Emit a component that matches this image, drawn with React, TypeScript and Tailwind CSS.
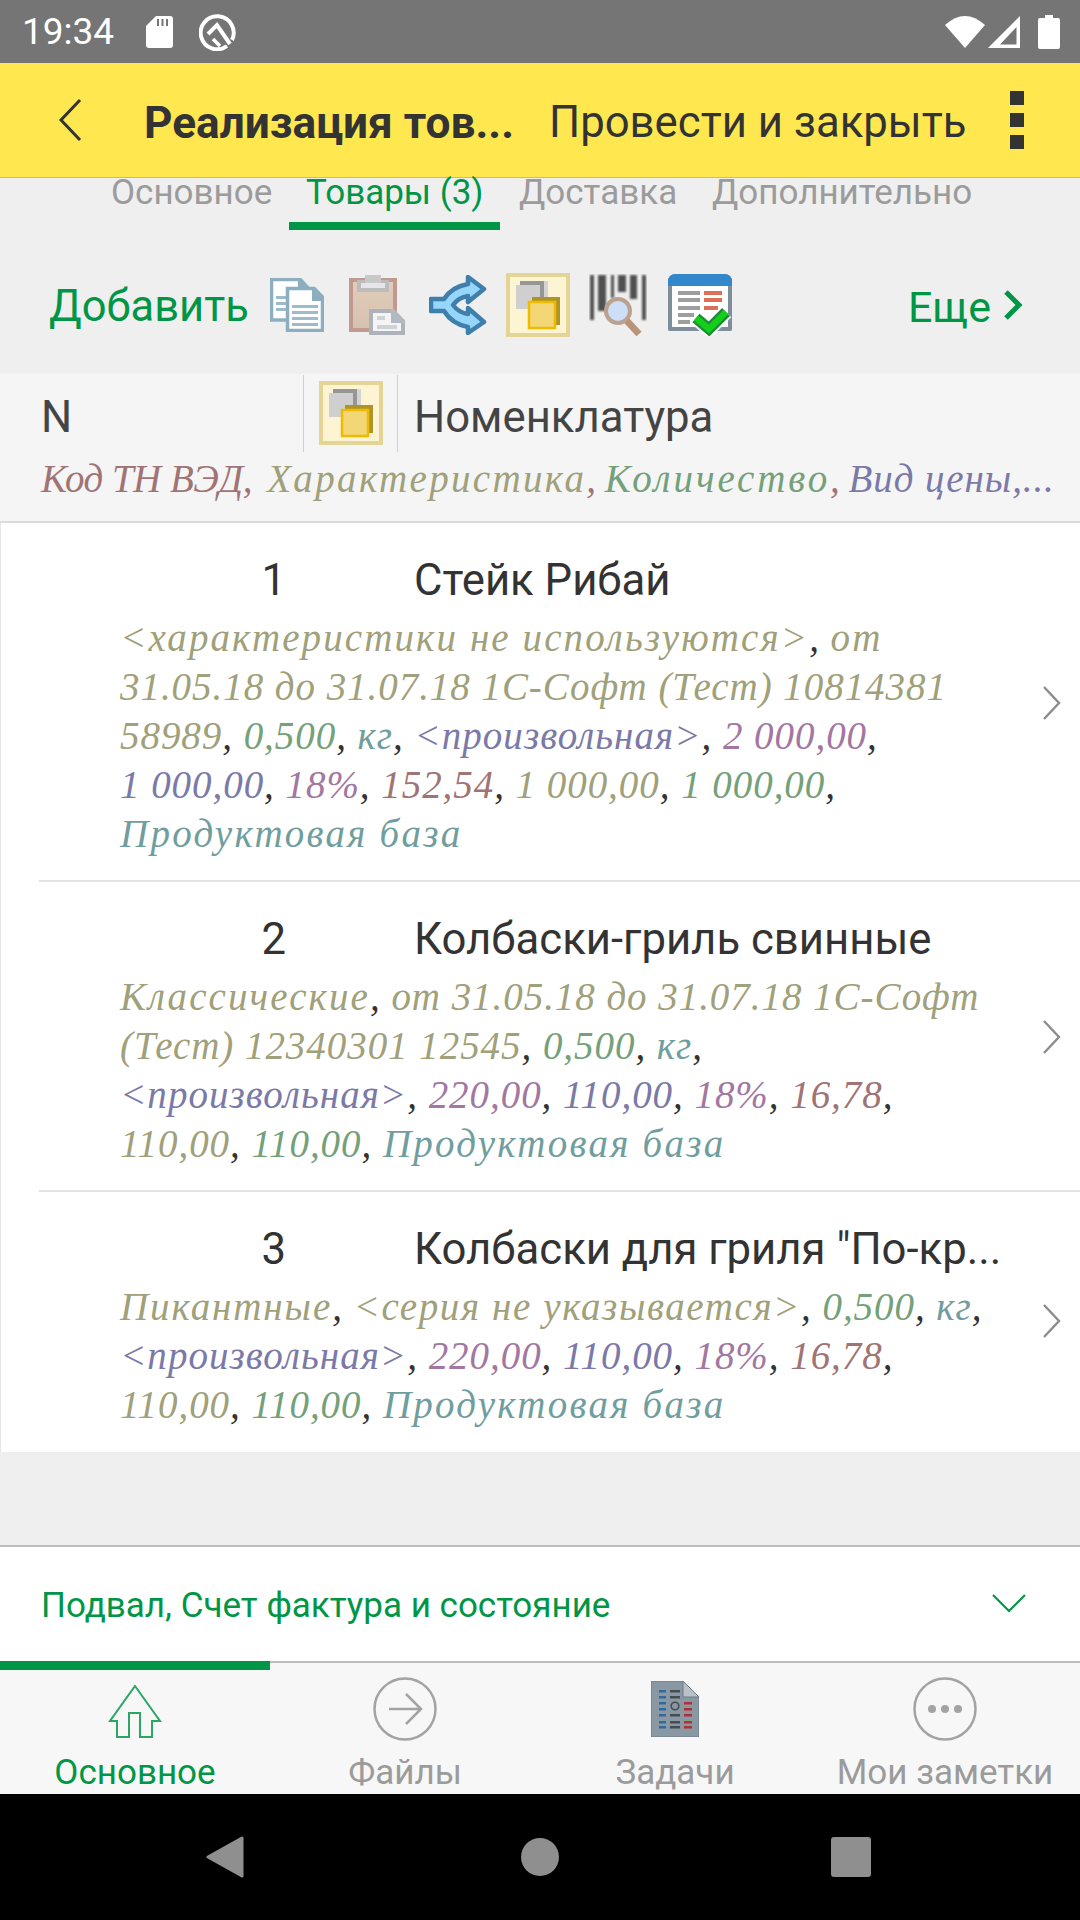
import React from "react";

const O = "text-[#a0a07a]";
const OW = "text-[#a0a07a] tracking-[2.1px]";
const OM = "text-[#a0a07a] tracking-[1.6px]";
const OX = "text-[#a0a07a] tracking-[1.9px]";
const G = "text-[#74a07a]";
const T = "text-[#709e9e]";
const TW = "text-[#709e9e] tracking-[2.25px]";
const I = "text-[#7b79a8]";
const IW = "text-[#7b79a8] tracking-[1.05px]";
const P = "text-[#a277a2]";
const B = "text-[#a07474]";

type Seg = [string, string];
type Line = Seg[];

const Detail = ({ lines }: { lines: Line[] }) => (
  <div className="font-['Liberation_Serif',serif] italic text-[39px] tracking-[0.95px] leading-[49px] whitespace-nowrap text-[#333333]">
    {lines.map((line, i) => (
      <div key={i}>
        {line.map(([cls, txt], j) => (
          <span key={j} className={cls}>
            {txt}
          </span>
        ))}
      </div>
    ))}
  </div>
);

const Chevron = () => (
  <svg width="20" height="36" viewBox="0 0 20 36" className="shrink-0">
    <path d="M2 2 L17 18 L2 34" fill="none" stroke="#8c8c8c" strokeWidth="2.4" />
  </svg>
);

const ROWS: { n: string; name: string; h: string; chev: string; lines: Line[] }[] = [
  {
    n: "1",
    name: "Стейк Рибай",
    h: "h-[359px]",
    chev: "mt-[2px]",
    lines: [
      [[OW, "<характеристики не используются>"], ["", ", "], [OW, "от"]],
      [[O, "31.05.18 до 31.07.18 1С-Софт (Тест) 10814381"]],
      [[O, "58989"], ["", ", "], [G, "0,500"], ["", ", "], [T, "кг"], ["", ", "], [IW, "<произвольная>"], ["", ", "], [P, "2 000,00"], ["", ","]],
      [[I, "1 000,00"], ["", ", "], [P, "18%"], ["", ", "], [B, "152,54"], ["", ", "], [O, "1 000,00"], ["", ", "], [G, "1 000,00"], ["", ","]],
      [[TW, "Продуктовая база"]],
    ],
  },
  {
    n: "2",
    name: "Колбаски-гриль свинные",
    h: "h-[310px]",
    chev: "mt-[2px]",
    lines: [
      [[OW, "Классические"], ["", ", "], [O, "от 31.05.18 до 31.07.18 1С-Софт"]],
      [[O, "(Тест) 12340301 12545"], ["", ", "], [G, "0,500"], ["", ", "], [T, "кг"], ["", ","]],
      [[IW, "<произвольная>"], ["", ", "], [P, "220,00"], ["", ", "], [I, "110,00"], ["", ", "], [P, "18%"], ["", ", "], [B, "16,78"], ["", ","]],
      [[O, "110,00"], ["", ", "], [G, "110,00"], ["", ", "], [TW, "Продуктовая база"]],
    ],
  },
  {
    n: "3",
    name: 'Колбаски для гриля "По-кр...',
    h: "h-[260px]",
    chev: "mt-[-2px]",
    lines: [
      [[OX, "Пикантные"], ["", ", "], [OM, "<серия не указывается>"], ["", ", "], [G, "0,500"], ["", ", "], [T, "кг"], ["", ","]],
      [[IW, "<произвольная>"], ["", ", "], [P, "220,00"], ["", ", "], [I, "110,00"], ["", ", "], [P, "18%"], ["", ", "], [B, "16,78"], ["", ","]],
      [[O, "110,00"], ["", ", "], [G, "110,00"], ["", ", "], [TW, "Продуктовая база"]],
    ],
  },
];

const Layers = () => (
  <svg width="64" height="64" viewBox="0 0 64 64">
    <rect x="2" y="2" width="60" height="60" fill="#fcf4d3" stroke="#e4d496" strokeWidth="4" />
    <rect x="14" y="8" width="28" height="28" fill="#969696" />
    <rect x="38" y="8" width="4" height="28" fill="#d4d4d4" />
    <rect x="10" y="12" width="24" height="24" fill="#cfcfcf" />
    <rect x="26" y="24" width="28" height="28" fill="#ae9428" />
    <rect x="23" y="29" width="26" height="26" fill="#f3d675" stroke="#efbb00" strokeWidth="2.5" />
  </svg>
);

const Docs = () => (
  <svg width="54" height="54" viewBox="0 0 54 54" className="ml-[21px]">
    <path d="M1.500 1.500 H30 L38 10 V42 H1.500 Z" fill="#fff" stroke="#8caebf" strokeWidth="3.500" />
    <path d="M28 0 H31 L40 10 V14 H28 Z" fill="#8caebf" />
    <rect x="6" y="18" width="14" height="3" fill="#9dbccb" />
    <rect x="6" y="24" width="14" height="3" fill="#9dbccb" />
    <rect x="6" y="30" width="14" height="3" fill="#9dbccb" />
    <path d="M17.500 10.500 H44 L52.500 19 V52.500 H17.500 Z" fill="#fff" stroke="#8caebf" strokeWidth="3.500" />
    <path d="M42 9 H45 L54 19 V23 H42 Z" fill="#8caebf" />
    <rect x="22" y="27" width="26" height="3" fill="#9dbccb" />
    <rect x="22" y="33" width="26" height="3" fill="#9dbccb" />
    <rect x="22" y="39" width="26" height="3" fill="#9dbccb" />
    <rect x="22" y="45" width="26" height="3" fill="#9dbccb" />
  </svg>
);

const Clip = () => (
  <svg width="56" height="60" viewBox="0 0 56 60" className="ml-[25px]">
    <defs>
      <linearGradient id="cl" x1="0" y1="0" x2="0" y2="1">
        <stop offset="0" stopColor="#e2cdbb" />
        <stop offset="1" stopColor="#d6c0ae" />
      </linearGradient>
    </defs>
    <rect x="2" y="5" width="44" height="50" fill="url(#cl)" stroke="#c09a90" strokeWidth="4" />
    <rect x="8" y="5" width="32" height="12" fill="#bcbcbc" />
    <rect x="16" y="0" width="16" height="8" fill="#c8c8c8" />
    <rect x="12" y="8" width="24" height="5" fill="#e6e6ea" />
    <path d="M22 36 H44 L54 46 V58 H22 Z" fill="#f4f4f4" stroke="#adb3b9" strokeWidth="4" />
    <path d="M42 34 H45 L56 46 V48 H42 Z" fill="#b3b9c1" />
    <rect x="28" y="41" width="8" height="4" fill="#ced3d8" />
    <rect x="28" y="50" width="20" height="4" fill="#ced3d8" />
  </svg>
);

const Arrows = () => (
  <svg width="58" height="60" viewBox="0 0 58 60" className="ml-[24px]">
    <path
      d="M2 24 H15 C20 16 28 11 39 9 V2 L55 14 L39 27 V21 C32 22 27 26 24 30 C27 34 32 38 39 39 V33 L55 47 L39 58 V52 C28 50 20 44 15 36 H2 Z"
      fill="#96d6fb"
      stroke="#3e7fab"
      strokeWidth="4.500"
      strokeLinejoin="round"
    />
  </svg>
);

const Barcode = () => (
  <svg width="58" height="62" viewBox="0 0 58 62" className="ml-[19px]">
    <g fill="#505050" style={{ filter: "blur(1px)" }}>
      <rect x="1" y="1" width="4" height="45" />
      <rect x="9" y="1" width="8" height="36" />
      <rect x="22" y="1" width="3" height="23" />
      <rect x="29" y="1" width="8" height="17" />
      <rect x="41" y="1" width="7" height="24" />
      <rect x="53" y="1" width="4" height="45" />
    </g>
    <g style={{ filter: "blur(0.7px)" }}>
      <circle cx="29" cy="37" r="12" fill="#cddff6" stroke="#bba18f" strokeWidth="4" />
      <path d="M38 47 L50 60" stroke="#b89478" strokeWidth="7" />
    </g>
  </svg>
);

const Check = () => (
  <svg width="64" height="62" viewBox="0 0 64 62" className="ml-[21px]">
    <path d="M0 8 Q0 0 8 0 H56 Q64 0 64 8 V56 Q64 57 60 57 H4 Q0 57 0 56 Z" fill="#7e8e9c" />
    <path d="M0 12 V8 Q0 0 8 0 H56 Q64 0 64 8 V12 Z" fill="#3388cc" />
    <rect x="4" y="12" width="56" height="41" fill="#fff" />
    <g fill="#9e9e9e">
      <rect x="10" y="17" width="22" height="4" />
      <rect x="10" y="24" width="22" height="4" />
      <rect x="10" y="32" width="22" height="4" />
      <rect x="10" y="39" width="16" height="4" />
      <rect x="10" y="46" width="12" height="4" />
    </g>
    <g fill="#dc6f55">
      <rect x="36" y="17" width="18" height="4" />
      <rect x="36" y="24" width="18" height="4" />
      <rect x="36" y="32" width="14" height="4" />
    </g>
    <path d="M28 44 L41 55 L58 38" fill="none" stroke="#ffffff" strokeWidth="15" opacity="0.85" />
    <path d="M28 44 L41 55 L58 38" fill="none" stroke="#1f8a36" strokeWidth="11" />
    <path d="M28 44 L41 55 L58 38" fill="none" stroke="#12d018" strokeWidth="6.500" />
  </svg>
);

const BarTab = ({ label, active, children }: { label: string; active?: boolean; children: React.ReactNode }) => (
  <div className="w-[270px] flex flex-col items-center">
    <div className="h-[64px] mt-[14px] flex items-center justify-center">{children}</div>
    <div className={`mt-[12px] text-[35px] leading-[40px] whitespace-nowrap ${active ? "text-[#009646]" : "text-[#9b9b9b]"}`}>{label}</div>
  </div>
);

export default function App() {
  return (
    <div className="w-[1080px] h-[1920px] flex flex-col overflow-hidden bg-[#efefef] font-['Roboto',sans-serif]">
      {/* status bar */}
      <div className="h-[63px] bg-[#757575] flex items-center pl-[22px] pr-[20px] text-white shrink-0">
        <span className="text-[37px] leading-none">19:34</span>
        <svg width="27" height="32" viewBox="0 0 27 32" className="ml-[32px]">
          <path d="M10 0 H24 Q27 0 27 3 V29 Q27 32 24 32 H3 Q0 32 0 29 V10 Z" fill="#fff" />
          <path d="M12 3 v7 M16.500 3 v7 M21 3 v7" stroke="#757575" strokeWidth="2" />
        </svg>
        <svg width="38" height="38" viewBox="0 0 38 38" className="ml-[26px]">
          <path d="M28 33 A16.500 16.500 0 1 1 33 27" fill="none" stroke="#fff" strokeWidth="4" />
          <path d="M9 21 L18 12 L31 31" fill="none" stroke="#fff" strokeWidth="4" />
          <path d="M14 26 L21 33" fill="none" stroke="#fff" strokeWidth="3.500" />
        </svg>
        <div className="ml-auto flex items-center">
          <svg width="40" height="32" viewBox="0 0 40 32">
            <path d="M0 9 Q20 -9 40 9 L20 32 Z" fill="#fff" />
          </svg>
          <svg width="32" height="32" viewBox="0 0 32 32" className="ml-[3px]">
            <path d="M0 32 L32 0 V32 Z" fill="#fff" />
            <path d="M12 28.500 L28.500 11 V28.500 Z" fill="#757575" />
          </svg>
          <svg width="22" height="34" viewBox="0 0 22 34" className="ml-[18px]">
            <path d="M7 3 V0 H15 V3 H20 Q22 3 22 5 V32 Q22 34 20 34 H2 Q0 34 0 32 V5 Q0 3 2 3 Z" fill="#fff" />
          </svg>
        </div>
      </div>

      {/* header */}
      <div className="h-[115px] bg-[#ffe84f] border-b border-[#d5c33f] flex items-center shrink-0 text-[#333333]">
        <svg width="24" height="44" viewBox="0 0 24 44" className="ml-[58px]">
          <path d="M22 2 L3 22 L22 42" fill="none" stroke="#333333" strokeWidth="3" />
        </svg>
        <span className="ml-[62px] w-[405px] text-[44.2px] pt-[6px] font-bold whitespace-nowrap">Реализация тов...</span>
        <span className="text-[43.7px] pt-[6px] whitespace-nowrap">Провести и закрыть</span>
        <div className="ml-[43px] flex flex-col gap-[8px]">
          <div className="w-[14px] h-[14px] bg-[#333333]" />
          <div className="w-[14px] h-[14px] bg-[#333333]" />
          <div className="w-[14px] h-[14px] bg-[#333333]" />
        </div>
      </div>

      {/* form tabs */}
      <div className="h-[52px] flex pl-[94px] shrink-0 text-[35px] text-[#9b9b9b]">
        <div className="px-[17px] leading-[30px] w-[195px] whitespace-nowrap">Основное</div>
        <div className="w-[211px] px-[17px] leading-[30px] text-[#009646] border-b-[8px] border-[#009646] whitespace-nowrap">Товары (3)</div>
        <div className="pl-[19px] leading-[30px] w-[212px] whitespace-nowrap">Доставка</div>
        <div className="leading-[30px] whitespace-nowrap">Дополнительно</div>
      </div>

      {/* toolbar */}
      <div className="h-[144px] flex items-center shrink-0 pl-[49px] pt-[6px]">
        <span className="text-[43.5px] pt-[4px] text-[#009646] whitespace-nowrap w-[200px]">Добавить</span>
        <Docs />
        <Clip />
        <Arrows />
        <div className="ml-[19px]">
          <Layers />
        </div>
        <Barcode />
        <Check />
        <span className="ml-auto text-[43px] pt-[4px] text-[#009646]">Еще</span>
        <svg width="20" height="32" viewBox="0 0 20 32" className="ml-[12px] mr-[57px]">
          <path d="M3 3 L16 16 L3 29" fill="none" stroke="#009646" strokeWidth="5" />
        </svg>
      </div>

      {/* table header */}
      <div className="h-[149px] bg-[#f5f5f5] border-b-2 border-[#dcdcdc] shrink-0">
        <div className="flex h-[78px] pt-[1px]">
          <div className="w-[304px] border-r border-[#d0d0d0] pl-[41px] text-[43.7px] leading-[84px] text-[#444444]">N</div>
          <div className="w-[94px] border-r border-[#d0d0d0] flex items-start pl-[15px] pt-[6px]">
            <Layers />
          </div>
          <div className="pl-[16px] text-[43.7px] leading-[84px] text-[#444444]">Номенклатура</div>
        </div>
        <div className="pl-[41px] font-['Liberation_Serif',serif] italic text-[39px] leading-[54px] whitespace-nowrap">
          <span className="text-[#a07474] tracking-[-0.5px]">Код ТН ВЭД</span>
          <span className="text-[#a07474] tracking-[2.5px]">, </span>
          <span className="text-[#a0a07a] tracking-[2.35px]">Характеристика</span>
          <span className="text-[#a07474] tracking-[-0.5px]">, </span>
          <span className="text-[#74a07a] tracking-[2.9px]">Количество</span>
          <span className="text-[#a07474] tracking-[-0.5px]">, </span>
          <span className="text-[#7b79a8] tracking-[0.9px]">Вид цены,...</span>
        </div>
      </div>

      {/* rows */}
      <div className="bg-white shrink-0 border-l border-[#e6e6e6]">
        {ROWS.map((r, i) => (
          <div key={r.n} className={`${r.h} flex flex-col pl-[38px]`}>
            <div className={`flex-1 flex items-center ${i < 2 ? "border-b-2 border-[#e2e2e2]" : ""}`}>
              <div className="flex-1 self-start pt-[31px]">
                <div className="flex text-[43.7px] leading-[52px] text-[#333333] whitespace-nowrap">
                  <span className="w-[247px] text-right">{r.n}</span>
                  <span className="ml-[128px]">{r.name}</span>
                </div>
                <div className="pl-[81px] mt-[7px]">
                  <Detail lines={r.lines} />
                </div>
              </div>
              <div className={`mr-[18px] ${r.chev}`}>
                <Chevron />
              </div>
            </div>
          </div>
        ))}
      </div>

      {/* spacer */}
      <div className="h-[95px] shrink-0 border-b-2 border-[#bdbdbd]" />

      {/* footer group */}
      <div className="h-[114px] bg-white flex items-center shrink-0 pl-[41px] pr-[54px] pt-[4px] text-[35px] text-[#009646]">
        <span className="whitespace-nowrap">Подвал, Счет фактура и состояние</span>
        <svg width="34" height="20" viewBox="0 0 34 20" className="ml-auto mb-[6px]">
          <path d="M1 2 L17 18 L33 2" fill="none" stroke="#009646" strokeWidth="2.200" />
        </svg>
      </div>

      {/* bottom tabs */}
      <div className="h-[133px] bg-[#f7f7f7] border-t-2 border-[#bdbdbd] shrink-0 relative flex">
        <div className="absolute left-0 top-[-2px] w-[270px] h-[9px] bg-[#009646]" />
        <BarTab label="Основное" active>
          <svg width="54" height="54" viewBox="0 0 54 54" className="mt-[5px]">
            <path d="M27 1 L52 36 H44 V52 H32 V28 H21 V52 H9 V36 H2 Z" fill="none" stroke="#2aa665" strokeWidth="2" />
          </svg>
        </BarTab>
        <BarTab label="Файлы">
          <svg width="64" height="64" viewBox="0 0 64 64">
            <circle cx="32" cy="32" r="30.500" fill="none" stroke="#a3a3a3" strokeWidth="2.500" />
            <path d="M16 32 H47 M33 17 L48 32 L33 47" fill="none" stroke="#a3a3a3" strokeWidth="2.500" />
          </svg>
        </BarTab>
        <BarTab label="Задачи">
          <svg width="48" height="56" viewBox="0 0 48 56" style={{ filter: "blur(0.4px)" }}>
            <path d="M0 0 H32 L48 16 V56 H0 Z" fill="#8a98a3" stroke="#6d7a85" strokeWidth="1" />
            <path d="M32 0 L48 16 H32 Z" fill="#b8c0c8" stroke="#6d7a85" strokeWidth="1" />
            <g fill="#2f6a9e">
              <rect x="8" y="9" width="7" height="2.500" />
              <rect x="8" y="15" width="7" height="2.500" />
              <rect x="8" y="21" width="7" height="2.500" />
              <rect x="8" y="27" width="7" height="2.500" />
              <rect x="8" y="33" width="7" height="2.500" />
              <rect x="8" y="40" width="7" height="2.500" />
              <rect x="8" y="45" width="7" height="2.500" />
            </g>
            <g fill="#454c53">
              <rect x="19" y="9" width="10" height="2.500" />
              <rect x="19" y="15" width="10" height="2.500" />
              <rect x="19" y="33" width="10" height="2.500" />
              <rect x="19" y="40" width="10" height="2.500" />
              <rect x="19" y="45" width="10" height="2.500" />
            </g>
            <circle cx="24" cy="25" r="3.800" fill="none" stroke="#454c53" strokeWidth="1.600" />
            <g fill="#b23030">
              <rect x="33" y="21" width="8" height="2.500" />
              <rect x="33" y="27" width="8" height="2.500" />
              <rect x="33" y="33" width="8" height="2.500" />
              <rect x="33" y="40" width="8" height="2.500" />
              <rect x="33" y="45" width="8" height="2.500" />
            </g>
          </svg>
        </BarTab>
        <BarTab label="Мои заметки">
          <svg width="64" height="64" viewBox="0 0 64 64">
            <circle cx="32" cy="32" r="30.500" fill="none" stroke="#a3a3a3" strokeWidth="2.500" />
            <circle cx="19" cy="32" r="4" fill="#a3a3a3" />
            <circle cx="32" cy="32" r="4" fill="#a3a3a3" />
            <circle cx="45" cy="32" r="4" fill="#a3a3a3" />
          </svg>
        </BarTab>
      </div>

      {/* nav bar */}
      <div className="flex-1 bg-black relative flex items-center">
        <svg width="38" height="42" viewBox="0 0 38 42" className="ml-[206px]">
          <path d="M36 2 V40 L2 21 Z" fill="#8f8f8f" stroke="#8f8f8f" strokeWidth="3" strokeLinejoin="round" />
        </svg>
        <div className="w-[38px] h-[38px] rounded-full bg-[#8f8f8f] ml-[277px]" />
        <div className="w-[40px] h-[40px] rounded-[3px] bg-[#8f8f8f] ml-[272px]" />
      </div>
    </div>
  );
}
